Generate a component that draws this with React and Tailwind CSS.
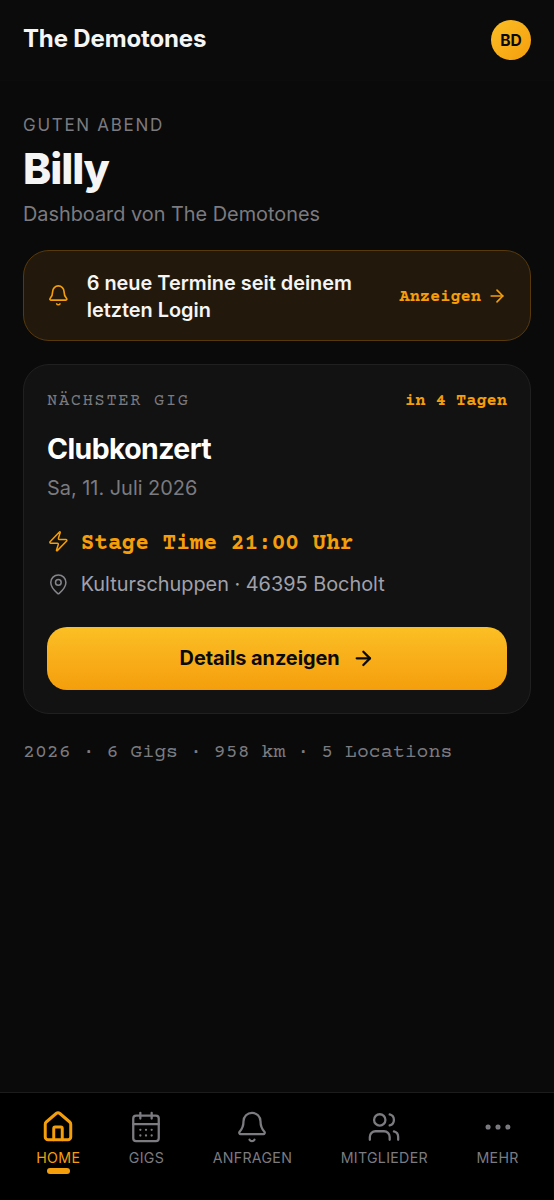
import { ArrowRight, Bell, CalendarDays, Ellipsis, House, MapPin, Users, Zap } from 'lucide-react';

const navItems = [
  { label: 'HOME', icon: House, active: true },
  { label: 'GIGS', icon: CalendarDays },
  { label: 'ANFRAGEN', icon: Bell },
  { label: 'MITGLIEDER', icon: Users },
  { label: 'MEHR', icon: Ellipsis },
];

const mono = "font-['Courier_Prime','Courier_10_Pitch','Nimbus_Mono_PS','Liberation_Mono',monospace]";

function Header() {
  return (
    <header className="flex h-[81px] shrink-0 items-center justify-between border-b border-[#0c0c0c] bg-[#0b0b0b] px-[23px]">
      <span className="-mt-[2px] text-[24px] leading-[30px] font-bold tracking-[-0.15px] text-[#f5f5f5]">The Demotones</span>
      <div className="flex size-[40px] items-center justify-center rounded-full bg-linear-135 from-[#fbbf24] to-[#f59e0b] text-[15.6px] font-bold text-[#0a0a0a]">
        <span className="mt-px">BD</span>
      </div>
    </header>
  );
}

function NewDatesBanner() {
  return (
    <div className="mt-[22px] flex h-[91px] items-center rounded-[26px] border border-[#58390c] bg-[#22190c] px-[23px]">
      <Bell size={22.7} strokeWidth={1.75} className="shrink-0 text-[#f59e0b]" />
      <p className="mt-[2px] ml-[17px] flex-1 text-[19.9px] leading-[27px] font-semibold text-[#f5f5f5]">
        6 neue Termine seit deinem
        <br />
        letzten Login
      </p>
      <button className={`${mono} flex items-center gap-[6px] text-[17px] font-bold text-[#f59e0b]`}>
        <span className="mt-[5px]">Anzeigen</span>
        <ArrowRight size={20} strokeWidth={2} />
      </button>
    </div>
  );
}

function NextGigCard() {
  return (
    <section className="mt-[23px] h-[350px] rounded-[26px] border border-[#202020] bg-[#121212] px-[23px] pt-[24px]">
      <div className={`${mono} flex items-center justify-between text-[17px] leading-[26px]`}>
        <span className="tracking-[1.7px] text-[#7b7b80]">NÄCHSTER GIG</span>
        <span className="font-bold text-[#f59e0b]">in 4 Tagen</span>
      </div>
      <h2 className="mt-[15px] text-[28.4px] leading-[37px] font-bold tracking-[-0.57px] text-white">Clubkonzert</h2>
      <p className="mt-[7px] text-[19.9px] leading-[28px] text-[#7b7b80]">Sa, 11. Juli 2026</p>
      <div className="mt-[22px] flex h-[34px] items-center gap-[11px] text-[#f59e0b]">
        <Zap size={22.7} strokeWidth={1.6} />
        <span className={`${mono} mt-[7px] text-[22.75px] font-bold`}>Stage Time 21:00 Uhr</span>
      </div>
      <div className="mt-[11px] flex h-[30px] items-center gap-[11px] text-[#a1a1aa]">
        <MapPin size={22.7} strokeWidth={1.6} className="text-[#85858c]" />
        <span className="mt-[2px] text-[19.87px]">Kulturschuppen · 46395 Bocholt</span>
      </div>
      <button className="mt-[28px] flex h-[62.5px] w-full items-center justify-center gap-[12px] rounded-[20px] bg-linear-to-b from-[#fbbf24] to-[#f59e0b] text-[19.9px] font-bold tracking-[-0.04px] text-[#0a0a0a]">
        <span className="mt-px">Details anzeigen</span>
        <ArrowRight size={22.7} strokeWidth={2.4} />
      </button>
    </section>
  );
}

function BottomNav() {
  return (
    <nav className="flex h-[108px] shrink-0 justify-around border-t border-[#1c1c1c] bg-black pr-[11px] pl-[12px] pt-[17px]">
      {navItems.map(({ label, icon: Icon, active }) => (
        <a key={label} className={`flex flex-col items-center ${active ? 'text-[#f59e0b]' : 'text-[#7b7b80]'}`}>
          <Icon size={34} strokeWidth={active ? 2.1 : 1.6} />
          <span className="mt-[5px] text-[14.2px] leading-[17px] tracking-[0.3px]">{label}</span>
          {active && <span className="mt-[2px] h-[6px] w-[23px] rounded-full bg-[#f59e0b]" />}
        </a>
      ))}
    </nav>
  );
}

export default function App() {
  return (
    <div className="flex h-[1200px] w-full flex-col bg-[#0a0a0a] font-[Inter,sans-serif]">
      <Header />
      <main className="flex-1 px-[23px] pt-[32px]">
        <p className="text-[17px] leading-[24px] tracking-[1.7px] text-[#7b7b80]">GUTEN ABEND</p>
        <h1 className="mt-[6px] text-[42.6px] leading-[51px] font-extrabold tracking-[-1.1px] text-[#f5f5f5]">Billy</h1>
        <p className="mt-[6px] text-[19.87px] leading-[28px] text-[#7b7b80]">Dashboard von The Demotones</p>
        <NewDatesBanner />
        <NextGigCard />
        <p className={`${mono} mt-[24px] text-[19.9px] leading-[30px] text-[#7b7b80]`}>
          2026 · 6 Gigs · 958 km · 5 Locations
        </p>
      </main>
      <BottomNav />
    </div>
  );
}
